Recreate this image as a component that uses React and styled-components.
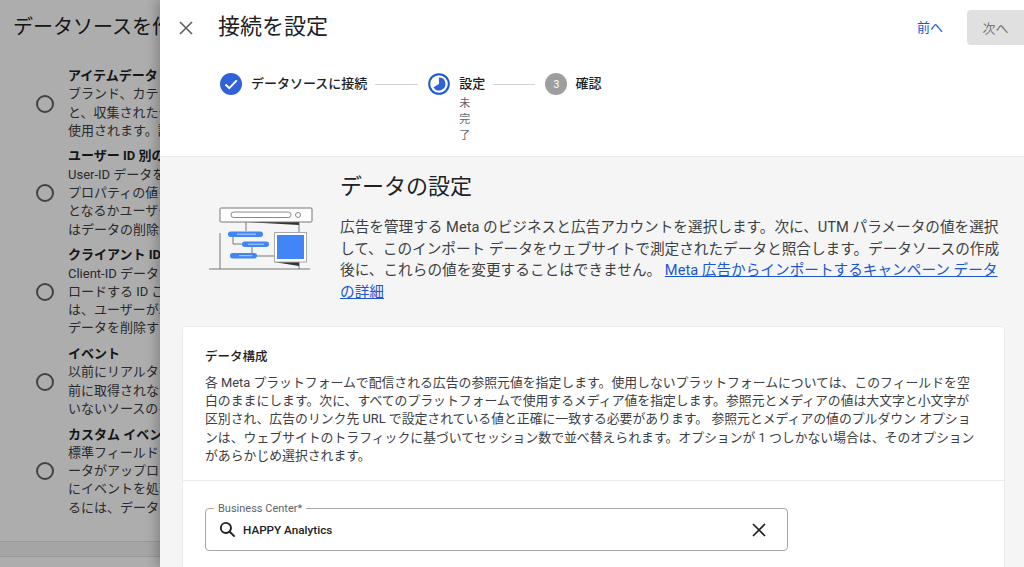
import React from 'react';
import styled, { createGlobalStyle } from 'styled-components';

const GlobalStyle = createGlobalStyle`
    html, body {
        margin: 0;
        padding: 0;
        background: #fff;
    }
    body {
        font-family: Roboto, "Noto Sans CJK JP", sans-serif;
        color: #202124;
    }
`;

const sources = [
    {
        title: 'アイテムデータ',
        lines: ['ブランド、カテゴリなどのアイテムデータをアップロードする', 'と、収集されたデータと結合されます。レポートやオーディエンスで', '使用されます。詳細'],
    },
    {
        title: 'ユーザー ID 別のデータ',
        lines: ['User-ID データをアップロードすると、ユーザー', 'プロパティの値を追加できます。オーディエンスの対象', 'となるかユーザーを判断します。アップロード後', 'はデータの削除が可能です。'],
    },
    {
        title: 'クライアント ID 別のデータ',
        lines: ['Client-ID データをアップロードします。アップ', 'ロードする ID ごとにデータが結合されます。', 'は、ユーザーが以前に送信したデータと結合します。', 'データを削除する場合があります。'],
    },
    {
        title: 'イベント',
        lines: ['以前にリアルタイムで取得したイベントの', '前に取得されなかったデータ、または接続して', 'いないソースのイベントをインポートします。'],
    },
    {
        title: 'カスタム イベント データ',
        lines: ['標準フィールドとカスタム フィールドのデ', 'ータがアップロードされます。アップロード時', 'にイベントを処理します。データを取り込む際に', 'るには、データをアップロードします。'],
    },
];

const cardLines = [
    '各 Meta プラットフォームで配信される広告の参照元値を指定します。使用しないプラットフォームについては、このフィールドを空',
    '白のままにします。次に、すべてのプラットフォームで使用するメディア値を指定します。参照元とメディアの値は大文字と小文字が',
    '区別され、広告のリンク先 URL で設定されている値と正確に一致する必要があります。 参照元とメディアの値のプルダウン オプショ',
    'ンは、ウェブサイトのトラフィックに基づいてセッション数で並べ替えられます。オプションが 1 つしかない場合は、そのオプション',
    'があらかじめ選択されます。',
];

const Root = styled.div`
    position: relative;
    width: 1024px;
    height: 567px;
    overflow: hidden;
`;

const BasePage = styled.div`
    height: 100%;
    display: flex;
    flex-direction: column;
`;

const BaseTitle = styled.h1`
    margin: 0;
    padding: 14px 0 0 13px;
    height: 53px;
    box-sizing: border-box;
    font-size: 20px;
    line-height: 27px;
    font-weight: 400;
    white-space: nowrap;
`;

const SourceList = styled.div`
    flex: 1;
    display: flex;
    flex-direction: column;
    gap: 7.3px;
    padding: 14px 0 0 36px;
`;

const SourceRow = styled.div`
    display: flex;
    align-items: center;
    gap: 14px;
`;

const Radio = styled.span`
    flex: none;
    width: 18px;
    height: 18px;
    box-sizing: border-box;
    border: 2px solid #5f6368;
    border-radius: 50%;
`;

const SourceText = styled.div`
    font-size: 13px;
    line-height: 18.3px;
    white-space: nowrap;
    color: #3c4043;
`;

const SourceTitle = styled.div`
    font-weight: 700;
    color: #202124;
`;

const BaseFooter = styled.div`
    height: 14px;
    margin-bottom: 10px;
    background: #f4f4f4;
    border-top: 1px solid #e2e2e2;
    border-bottom: 1px solid #e2e2e2;
`;

const Scrim = styled.div`
    position: absolute;
    inset: 0;
    background: rgba(0, 0, 0, 0.32);
`;

const Panel = styled.div`
    position: absolute;
    top: 0;
    bottom: 0;
    left: 160px;
    right: 0;
    display: flex;
    flex-direction: column;
    overflow: hidden;
    background: #f5f5f5;
    box-shadow: -4px 0 10px rgba(0, 0, 0, 0.22);
`;

const PanelHeader = styled.header`
    flex: none;
    height: 157px;
    box-sizing: border-box;
    background: #fff;
    border-bottom: 1px solid #ececec;
`;

const TopBar = styled.div`
    display: flex;
    align-items: flex-start;
    height: 73px;
    padding: 10px 0 0 17px;
    box-sizing: border-box;
`;

const IconButton = styled.button`
    flex: none;
    display: flex;
    padding: 0;
    border: none;
    background: none;
    color: ${(p) => p.$color || '#5f6368'};
`;

const CloseButton = styled(IconButton)`
    margin-top: 9px;
`;

const PanelTitle = styled.h2`
    flex: 1;
    margin: 0 0 0 23px;
    font-size: 22px;
    line-height: 34px;
    font-weight: 400;
`;

const BackButton = styled.button`
    margin: 9px 24px 0 0;
    padding: 0;
    border: none;
    background: none;
    font: inherit;
    font-size: 13px;
    line-height: 18px;
    color: #1a56d6;
`;

const NextButton = styled.button`
    width: 57px;
    height: 35px;
    padding: 0;
    border: none;
    border-radius: 4px 0 0 4px;
    background: #e0e0e0;
    font: inherit;
    font-size: 13px;
    color: #757575;
`;

const Stepper = styled.div`
    display: flex;
    align-items: flex-start;
    padding-left: 60px;
`;

const Step = styled.div`
    display: flex;
    align-items: flex-start;
    gap: ${(p) => p.$gap || 9}px;
`;

const StepIcon = styled.span`
    flex: none;
    display: flex;
    align-items: center;
    justify-content: center;
    width: 22px;
    height: 22px;
    border-radius: 50%;
    font-size: 10.5px;
    color: #fff;
    background: ${(p) => p.$bg || 'transparent'};
`;

const StepBody = styled.div`
    display: flex;
    flex-direction: column;
`;

const StepLabel = styled.div`
    font-size: 13px;
    line-height: 22px;
    font-weight: 500;
    white-space: nowrap;
`;

const StepNote = styled.div`
    width: 12px;
    margin-top: 1px;
    font-size: 11px;
    line-height: 16px;
    color: #5f6368;
`;

const Connector = styled.span`
    flex: none;
    width: ${(p) => p.$width}px;
    height: 1px;
    margin: 11px 10px 0 8px;
    background: #d4d4d4;
`;

const Intro = styled.section`
    flex: none;
    display: flex;
    padding: 15px 22px 0 30px;
`;

const Illustration = styled.svg`
    flex: none;
    width: 150px;
    height: 120px;
    margin-top: -1px;
`;

const IntroBody = styled.div`
    flex: 1;
`;

const IntroTitle = styled.h3`
    margin: 0 0 15px;
    font-size: 22px;
    line-height: 30px;
    font-weight: 400;
`;

const IntroText = styled.p`
    margin: 0;
    font-size: 14.65px;
    line-height: 21.7px;
    color: #3c4043;
`;

const IntroLink = styled.a`
    color: #1a56d6;
    text-decoration: underline;
`;

const Card = styled.section`
    flex: none;
    margin: 22px 19px 0 22px;
    background: #fff;
    border: 1px solid #ebebeb;
    border-radius: 4px;
`;

const CardIntro = styled.div`
    padding: 21px 0 15px 22px;
    border-bottom: 1px solid #ebebeb;
`;

const CardTitle = styled.h4`
    margin: 0 0 8px;
    font-size: 12.5px;
    line-height: 18px;
    font-weight: 500;
`;

const CardText = styled.p`
    margin: 0;
    font-size: 12.85px;
    line-height: 18.3px;
    color: #3c4043;
`;

const CardLine = styled.span`
    display: block;
    white-space: nowrap;
`;

const CardBody = styled.div`
    padding: 27px 22px 20px;
`;

const Field = styled.div`
    position: relative;
    display: flex;
    align-items: center;
    width: 583px;
    height: 43px;
    box-sizing: border-box;
    padding: 0 19px 0 12px;
    border: 1px solid #a8a8a8;
    border-radius: 4px;
`;

const FieldLabel = styled.span`
    position: absolute;
    top: -7px;
    left: 8px;
    padding: 0 4px;
    background: #fff;
    font-size: 11px;
    line-height: 13px;
    color: #5f6368;
`;

const FieldValue = styled.span`
    flex: 1;
    margin-left: 6px;
    font-size: 11.7px;
    font-weight: 500;
    color: #202124;
`;

function CloseIcon({ size }) {
    return (
        <svg width={size} height={size} viewBox="0 0 18 18" fill="none" stroke="currentColor" strokeWidth="1.7">
            <path d="M3 3 L15 15 M15 3 L3 15" />
        </svg>
    );
}

function CheckIcon() {
    return (
        <svg width="22" height="22" viewBox="0 0 22 22">
            <circle cx="11" cy="11" r="11" fill="#2f62d8" />
            <path d="M5.5 11.5 L9.3 15.2 L16.8 7.4" fill="none" stroke="#fff" strokeWidth="2" />
        </svg>
    );
}

function ProgressIcon() {
    return (
        <svg width="22" height="22" viewBox="0 0 22 22">
            <circle cx="11" cy="11" r="9.8" fill="none" stroke="#1a56d6" strokeWidth="2" />
            <path d="M11 4.6 A6.4 6.4 0 1 1 5.5 14.2 L11 11 Z" fill="#2f62d8" />
        </svg>
    );
}

function DataArt() {
    return (
        <Illustration viewBox="0 0 150 120">
            <path d="M30 62 V98 M109 51 V98 M19 98 H120" stroke="#777" strokeWidth="1" fill="none" />
            <path d="M57 51 H109 V54 Z" fill="#333" />
            <path d="M84 91 H109 V95 Z" fill="#333" />
            <rect x="30" y="37" width="92" height="14" rx="1" fill="#fff" stroke="#777" />
            <rect x="41" y="41" width="60" height="5.5" rx="2.7" fill="#fff" stroke="#888" />
            <circle cx="108" cy="44" r="2.5" fill="#fff" stroke="#888" />
            <path d="M56 51 V60 M43 66 V73 H52 M62 76 V82 M67 85 H84" stroke="#777" fill="none" />
            <rect x="38" y="60.5" width="35" height="5.5" rx="2.7" fill="#4285f4" />
            <rect x="52" y="70.5" width="27" height="5.5" rx="2.7" fill="#4285f4" />
            <rect x="40" y="82" width="27" height="5.5" rx="2.7" fill="#4285f4" />
            <path d="M47 63.2 H66 M58 73.2 H74 M49 84.7 H62" stroke="#bcd4fb" strokeWidth="1" />
            <rect x="84.5" y="61.5" width="32" height="29.5" fill="#fff" stroke="#aaa" />
            <rect x="87" y="64" width="27" height="24" fill="#4285f4" />
        </Illustration>
    );
}

export default function App() {
    return (
        <Root>
            <GlobalStyle />
            <BasePage>
                <BaseTitle>データソースを作成</BaseTitle>
                <SourceList>
                    {sources.map((s) => (
                        <SourceRow key={s.title}>
                            <Radio />
                            <SourceText>
                                <SourceTitle>{s.title}</SourceTitle>
                                {s.lines.map((l) => (
                                    <div key={l}>{l}</div>
                                ))}
                            </SourceText>
                        </SourceRow>
                    ))}
                </SourceList>
                <BaseFooter />
            </BasePage>
            <Scrim />
            <Panel>
                <PanelHeader>
                    <TopBar>
                        <CloseButton>
                            <CloseIcon size={18} />
                        </CloseButton>
                        <PanelTitle>接続を設定</PanelTitle>
                        <BackButton>前へ</BackButton>
                        <NextButton>次へ</NextButton>
                    </TopBar>
                    <Stepper>
                        <Step>
                            <StepIcon>
                                <CheckIcon />
                            </StepIcon>
                            <StepLabel>データソースに接続</StepLabel>
                        </Step>
                        <Connector $width={43} />
                        <Step>
                            <StepIcon>
                                <ProgressIcon />
                            </StepIcon>
                            <StepBody>
                                <StepLabel>設定</StepLabel>
                                <StepNote>未完了</StepNote>
                            </StepBody>
                        </Step>
                        <Connector $width={42} />
                        <Step $gap={8}>
                            <StepIcon $bg="#9e9e9e">3</StepIcon>
                            <StepLabel>確認</StepLabel>
                        </Step>
                    </Stepper>
                </PanelHeader>
                <Intro>
                    <DataArt />
                    <IntroBody>
                        <IntroTitle>データの設定</IntroTitle>
                        <IntroText>
                            広告を管理する Meta のビジネスと広告アカウントを選択します。次に、UTM パラメータの値を選択して、このインポート データをウェブサイトで測定されたデータと照合します。データソースの作成後に、これらの値を変更することはできません。{' '}
                            <IntroLink href="#">Meta 広告からインポートするキャンペーン データの詳細</IntroLink>
                        </IntroText>
                    </IntroBody>
                </Intro>
                <Card>
                    <CardIntro>
                        <CardTitle>データ構成</CardTitle>
                        <CardText>
                            {cardLines.map((l) => (
                                <CardLine key={l}>{l}</CardLine>
                            ))}
                        </CardText>
                    </CardIntro>
                    <CardBody>
                        <Field>
                            <FieldLabel>Business Center*</FieldLabel>
                            <svg width="19" height="19" viewBox="0 0 24 24" fill="none" stroke="#202124" strokeWidth="2.4">
                                <circle cx="10" cy="10" r="6.4" />
                                <path d="M14.8 14.8 L21 21" />
                            </svg>
                            <FieldValue>HAPPY Analytics</FieldValue>
                            <IconButton $color="#202124">
                                <CloseIcon size={18} />
                            </IconButton>
                        </Field>
                    </CardBody>
                </Card>
            </Panel>
        </Root>
    );
}
